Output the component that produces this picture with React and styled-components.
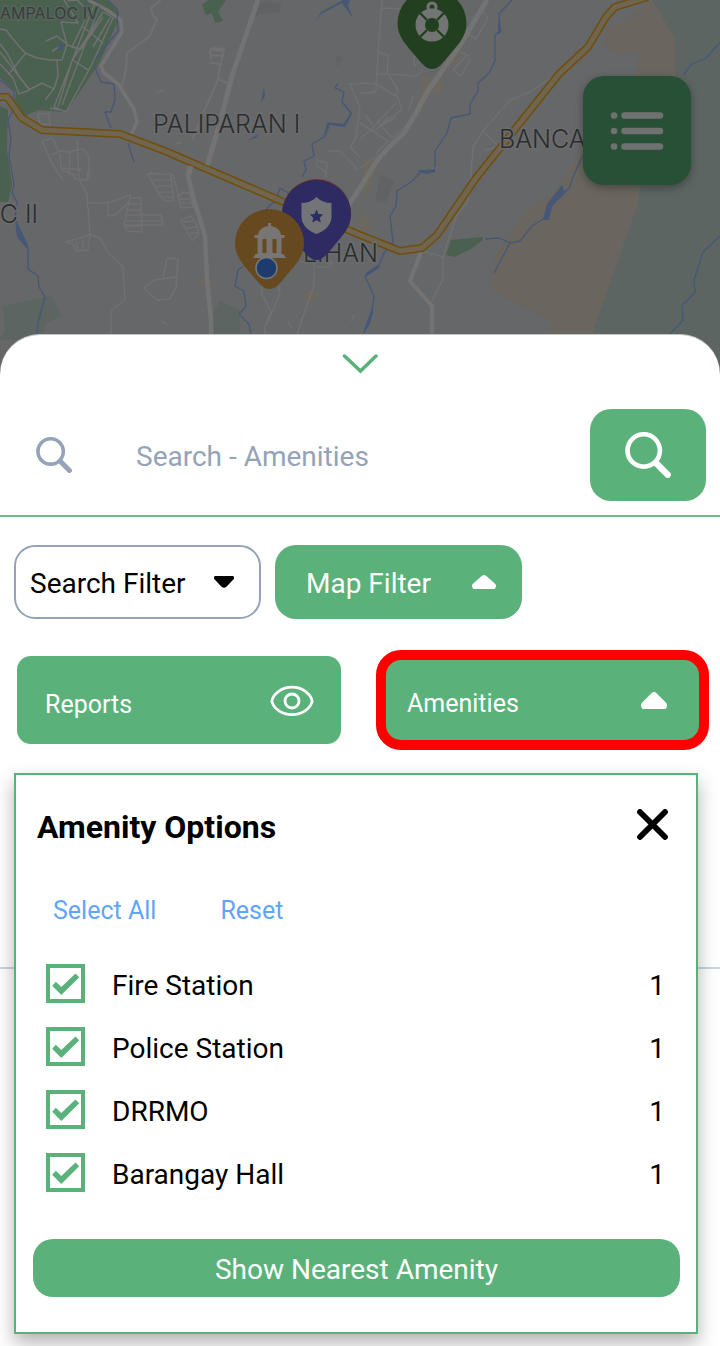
import React, { useState } from "react";
import styled, { createGlobalStyle, css } from "styled-components";

const GREEN = "#5ab27a";
const SLATE = "#94a3b8";

const GlobalStyle = createGlobalStyle`
  *, *::before, *::after { box-sizing: border-box; }
  body {
    margin: 0;
    background: #fff;
    color: #000;
    font-family: Roboto, "Liberation Sans", sans-serif;
  }
  button, input { font: inherit; color: inherit; }
  button { border: 0; padding: 0; background: none; cursor: pointer; }
`;

const Page = styled.main`
  display: flex;
  flex-direction: column;
  min-height: 100vh;
  overflow-x: hidden;
`;

const MapArea = styled.section`
  position: relative;
  height: 384px;
  background: #666769;
`;

const MapDrawing = styled.svg`
  display: block;
  width: 100%;
  height: 100%;
`;

const LegendButton = styled.button`
  position: absolute;
  top: 76px;
  right: 29px;
  display: grid;
  place-items: center;
  width: 108px;
  height: 109px;
  border-radius: 21px;
  background: #285037;
  box-shadow: 0 3px 8px rgba(0, 0, 0, 0.3);
`;

const Sheet = styled.section`
  position: relative;
  display: flex;
  flex-direction: column;
  flex: 1;
  margin-top: -50px;
  padding-bottom: 12px;
  border-top: 1px solid #c4c4c4;
  border-radius: 40px 40px 0 0;
  background: #fff;
`;

const CollapseButton = styled.button`
  display: grid;
  place-items: center;
  align-self: center;
  width: 80px;
  height: 58px;
  margin-bottom: 16px;
`;

const SearchForm = styled.form`
  display: flex;
  align-items: center;
  padding: 0 14px 14px 36px;
  border-bottom: 2px solid #6cbc8a;
  color: ${SLATE};
`;

const SearchInput = styled.input`
  flex: 1;
  min-width: 0;
  height: 60px;
  margin: 2px 20px 0 64px;
  padding: 0;
  border: 0;
  outline: 0;
  background: transparent;
  font-size: 28px;
  &::placeholder { color: ${SLATE}; opacity: 1; }
`;

const SearchButton = styled.button`
  display: grid;
  place-items: center;
  width: 116px;
  height: 92px;
  border-radius: 21px;
  background: ${GREEN};
  color: #fff;
`;

const FilterRow = styled.div`
  display: flex;
  gap: 14px;
  padding: 28px 14px 31px;
`;

const FilterButton = styled.button`
  display: flex;
  align-items: center;
  justify-content: space-between;
  width: 247px;
  height: 74px;
  border-radius: 21px;
  font-size: 28px;
  line-height: 36px;
  ${(p) =>
    p.$filled
      ? css`
          padding: 0 26px 0 31px;
          background: ${GREEN};
          color: #fff;
        `
      : css`
          padding: 0 25px 0 14px;
          border: 2px solid ${SLATE};
        `}
`;

const FilterName = styled.span`
  padding-top: 4px;
`;

const LayerRow = styled.div`
  display: grid;
  grid-template-columns: 324fr 333fr;
  align-items: center;
  gap: 35px;
  padding: 0 11px 23px 17px;
`;

const LayerButton = styled.button`
  display: flex;
  align-items: center;
  justify-content: space-between;
  height: ${(p) => (p.$active ? "100px" : "88px")};
  padding: ${(p) => (p.$active ? "0 32px 0 21px" : "2px 27px 0 28px")};
  border: ${(p) => (p.$active ? "10px solid #f00" : "0")};
  border-radius: ${(p) => (p.$active ? "25px" : "14px")};
  background: ${GREEN};
  color: #fff;
  font-size: 25px;
  line-height: 32px;
`;

const LayerName = styled.span`
  padding-top: 8px;
`;

const Stage = styled.div`
  display: grid;
  flex: 1;
  align-items: start;
`;

const Results = styled.div`
  grid-area: 1 / 1;
  align-self: stretch;
  margin-top: 194px;
  border-top: 2px solid #cbd5e1;
`;

const Panel = styled.section`
  grid-area: 1 / 1;
  display: flex;
  flex-direction: column;
  margin: 0 22px 0 14px;
  padding: 32px 16px 35px 17px;
  border: 2px solid ${GREEN};
  background: #fff;
  box-shadow: 0 9px 18px rgba(0, 0, 0, 0.3);
`;

const PanelHeader = styled.header`
  display: flex;
  align-items: center;
  justify-content: space-between;
  height: 40px;
  padding: 0 12px 0 4px;
`;

const PanelTitle = styled.h2`
  margin: 0;
  font-size: 32px;
  line-height: 40px;
  font-weight: 700;
`;

const CloseButton = styled.button`
  display: grid;
  place-items: center;
  padding-bottom: 5px;
`;

const Actions = styled.div`
  display: flex;
  gap: 64px;
  padding: 48px 20px 37px;
`;

const TextButton = styled.button`
  color: #60a5fa;
  font-size: 25px;
  line-height: 32px;
`;

const OptionList = styled.ul`
  display: flex;
  flex-direction: column;
  gap: 24px;
  margin: 0 0 47px;
  padding: 0 15px 0 13px;
  list-style: none;
`;

const OptionRow = styled.li`
  display: flex;
  align-items: center;
  justify-content: space-between;
  height: 39px;
  font-size: 28px;
  line-height: 36px;
`;

const OptionLabel = styled.label`
  display: flex;
  align-items: center;
  gap: 27px;
  cursor: pointer;
`;

const OptionText = styled.span`
  padding-top: 4px;
`;

const CheckFrame = styled.span`
  display: grid;
  width: 39px;
  height: 39px;
  > * { grid-area: 1 / 1; }
  > svg { pointer-events: none; }
  > input:not(:checked) + svg { visibility: hidden; }
`;

const CheckInput = styled.input`
  appearance: none;
  width: 39px;
  height: 39px;
  margin: 0;
  border: 4px solid ${GREEN};
  background: #fff;
  cursor: pointer;
`;

const PrimaryButton = styled.button`
  height: 58px;
  padding-top: 4px;
  border-radius: 20px;
  background: ${GREEN};
  color: #fff;
  font-size: 28px;
  line-height: 36px;
`;

const SearchIcon = ({ size }) => (
  <svg width={size} height={size} viewBox="0 0 46 46" fill="none" stroke="currentColor" aria-hidden="true">
    <circle cx="18.7" cy="18.5" r="16.2" strokeWidth="4.6" />
    <path d="M31 31 42.7 42.7" strokeWidth="6.4" strokeLinecap="round" />
  </svg>
);

const Caret = ({ width, height, down }) => (
  <svg width={width} height={height} viewBox="0 0 26 17" preserveAspectRatio="none" fill="currentColor" aria-hidden="true">
    <path
      d={
        down
          ? "M2 0H24Q26 0 26 2V4L16.5 15Q13 18.5 9.5 15L0 4V2Q0 0 2 0Z"
          : "M10.5 1.2Q13 -1 15.5 1.2L25.3 11Q27 14 24.6 17H1.4Q-1 14 .7 11Z"
      }
    />
  </svg>
);

const EyeIcon = () => (
  <svg width="44" height="32" viewBox="0 0 44 32" fill="none" stroke="#fff" strokeWidth="2.8" aria-hidden="true">
    <path d="M1.800 16C3.500 8.500 11.500 2.200 22 2.200S40.500 8.500 42.200 16C40.500 23.500 32.500 29.600 22 29.600S3.500 23.500 1.800 16Z" strokeLinejoin="round" />
    <circle cx="22" cy="16" r="7" />
  </svg>
);

const PIN = "M0 80C-5 80-8 77-14 70C-25 57-34.500 48-34.500 34.500A34.500 34.500 0 0 1 34.500 34.500C34.500 48 25 57 14 70C8 77 5 80 0 80Z";

const CityMap = () => (
  <MapDrawing viewBox="0 0 720 384" preserveAspectRatio="xMidYMin slice" role="img" aria-label="Map">
    <rect width="720" height="384" fill="#666769" />

    <g fill="#4a614f">
      <path d="M0 0H107L119 12V18L100 62 66 112 38 110 25 116 15 106 16 92 0 78Z" />
      <path d="M0 106 8 110 7 150 12 184 8 202H0Z" />
      <path d="M208 0H226L218 12 223 21 215 23 212 13 206 15 202 5Z" />
      <path d="M451 240 482 237 483 240 471 249 454 257 446 255Z" />
    </g>
    <g fill="#5c6562">
      <path d="M3 306 51 296 62 316 46 323 41 340H0V338L5 332Z" />
      <path d="M213 314 220 301 240 310 240 340H213Z" />
      <path d="M652 0H720V384H592L594 325 620 245 640 185 675 75V40Z" />
    </g>
    <g fill="#6a665f">
      <path d="M652 0 675 38V76L662 160 641 184 636 210 594 328V340H552L550 321 490 289 494 258 528 208 555 193 572 165 610 110 637 72 639 49 621 56 604 47 606 27 627 20Z" />
    </g>
    <g fill="#6b685f">
      <path d="M422 72 434 79 445 78 443 92 430 94 420 114 417 112 422 91Z" />
      <path d="M457 52 462 61 454 67 449 63Z" />
      <path d="M304 296 307 289 319 294 311 306Z" />
      <path d="M200 278H211V287H200Z" />
      <path d="M363 158 376 162 371 188 360 202V224L372 232 370 220 361 210Z" />
      <path d="M358 220 368 218 372 230 358 232Z" />
    </g>
    <g fill="#616264">
      <path d="M260 2 281 3 280 12 254 15Z" />
      <path d="M336 55 343 58 337 67Z" />
      <path d="M380 174 394 181 387 201 375 203Z" />
    </g>

    <g fill="none" stroke="#707071" strokeWidth="1.500" strokeLinejoin="round">
      <path d="M0 29 6 30 13 39 25 53 37 58 50 60 62 60 67 45 61 22M57 60 58 76 54 89 45 100M54 89 42 83 27 91 19 94 13 78 0 64M0 44 7 53 19 76 30 90M0 52 28 88M25 54 8 75M46 41 57 36 68 45 76 48M52 51 61 46M64 0 78 23 61 22" />
      <path d="M94 5 54 107 66 112 92 64 113 18 104 12M99 8 62 105M103 12 72 61 58 107M89 12 72 47 81 49 103 17M83 27 103 43M73 60 88 70M81 49 97 22M93 47 110 18M50 108 59 110M67 1 77 0 92 15" />
      <path d="M161 0 151 8 153 16 157 19 149 37 127 53 126 70 121 89M211 60 210 50 213 48 224 49 222 59 220 66 218 79 206 107 200 121 192 140M211 55 222 56M212 50 223 51M210 63 220 64M217 79 230 84" strokeWidth="2" />
      <path d="M38 114 49 114 50 125 40 124ZM42 141 53 138 58 151 66 152 83 149 89 157 89 180M42 141 52 163 63 180M52 155 60 151 70 152 69 175M77 139 79 178M60 154 61 168 67 169M63 168 82 170" />
      <path d="M62 170 75 175 74 179 87 180 88 170M79 180 87 194 89 223 90 234 101 239 107 252 123 267 125 299 111 311 111 334M89 203 108 203 130 195 130 201 115 215 108 216V202M130 198 141 198 142 232 127 231 124 225 130 198M128 204H141M126 210H141M125 215H161L163 225H125M126 221H162M125 226H141M66 242 87 236 90 234 88 250 76 251 73 244ZM76 242 78 249M83 240V249M148 174H171L174 201H165L158 193ZM153 180H171M156 186H172M158 192H173M163 197H174M148 174 153 172M173 174 178 194 181 208 193 207 190 194 184 192 179 195M179 199H190M181 203H191M181 220 191 216 197 225 199 234 192 241ZM184 222 194 221M187 228 197 227M190 234 199 232M167 258 178 259 176 287 170 299 157 300 144 288 154 280 176 277M163 278 167 258" />
      <path d="M382 0 378 52 376 91 364 94M378 52 388 55 387 74 416 76 423 70M382 8 410 9M376 74H388M360 83 376 84 396 96 398 90 388 74M360 93H376M397 96 402 109 374 131M377 121 392 138 406 126M360 123 388 141 376 154M360 139 371 130 380 120 396 103M415 45 414 66 421 60M480 8 488 18 476 39 468 34 486 5M465 57 453 70 461 76 471 58M460 52 469 56M413 96 409 110M365 115 373 125M376 130 388 117M381 126 396 117M386 150 360 168" />
      <path d="M348 84H360M350 84 360 108 356 137 350 148M327 151 340 151 358 170M325 171 317 166 317 160 327 163 326 177ZM351 147 360 158M558 73 530 92 510 100 483 131 473 147 470 188 468 201 456 217 443 257 443 279 431 303M483 131 500 148M485 150 503 146M422 251 443 257M262 278 262 294 271 312 265 326V335M279 286 280 294 266 326M314 263V285L297 334M300 262H332L329 267 314 267M288 321 292 328M354 315 351 321M161 321 167 324M175 143H182M157 92 164 90" />
    </g>

    <g fill="none" stroke="#737374" strokeLinejoin="round">
      <path d="M88 0 107 10 121 20 122 32 101 66 104 73 118 84 134 109 137 122 131 135" strokeWidth="3.500" />
      <path d="M258 0 232 76 220 122 207 167" strokeWidth="5" />
      <path d="M190 166 188 176 194 200 205 236 207 280 211 320V340" strokeWidth="4.500" />
      <path d="M487 0 459 47 429 89 416 113 404 133 388 148 376 162 360 188 338 221" strokeWidth="5" />
      <path d="M422 249 410 281 432 306V338" strokeWidth="4" />
    </g>

    <g fill="none" stroke="#465777" strokeWidth="1.300" strokeLinejoin="round">
      <path d="M108 0 117 9 118 31 95 60 96 70 101 82 114 84 115 99 111 112 105 112 111 128M128 143 134 162M0 80 14 91 14 108 8 120 11 138 9 156 14 184 12 193 17 202 15 220 28 248V269L38 276 39 287 45 297 38 322 37 335" />
      <path d="M338 83 335 88 344 92 342 102 351 113 344 125 328 123 324 137 312 144 314 156 304 161 306 170 302 177M302 186 291 195 280 188 276 200 267 208 264 215M244 266 238 270 235 286 244 291 246 306 239 314 249 324 251 336" />
      <path d="M512 0 499 14 500 31 495 35 495 61 489 73 478 83 478 91 470 104V114L451 118 447 133 435 151 435 167M435 170 422 171 411 182 397 191 396 206 390 216 393 242 384 253 378 268 365 276 374 296 372 312 364 333" />
      <path d="M720 43 712 51 706 58 692 64 683 75M584 153 572 179 570 187 554 203 543 219 532 226 520 241 510 243 499 238 485 239M510 243 494 273M720 236 703 252 694 280 695 293 682 305 683 320 669 335" />
    </g>
    <g fill="#465777">
      <path d="M315 23 321 12 343 0H350L348 6 353 18 347 10 342 3 321 14Z" />
      <path d="M264 87 265 96 261 103ZM248 140 259 134 256 138ZM59 42 63 45 62 50 58 50Z" />
      <path d="M327 123 343 124 351 114 347 108 341 102 346 105 352 114 345 127 330 125 325 138Z" />
      <path d="M417 171 420 170 433 170 435 168V172L427 174ZM498 21 502 31 498 35Z" />
      <path d="M372 307 373 314 369 326 363 333ZM366 273 379 264 376 270 364 278ZM562 185 565 193 552 206 549 220 543 220 547 204ZM14 210 18 224 28 245V250L17 237Z" />
    </g>

    <g fill="none" strokeLinejoin="round">
      <path d="M0 97H7L22 118 42 130 120 134 165 151 230 179 360 235 400 251 422 248 437 235 476 178 559 74 588 47 606 17 615 7 648-3" stroke="#704e0d" strokeWidth="8" />
      <path d="M0 97H7L22 118 42 130 120 134 165 151 230 179 360 235 400 251 422 248 437 235 476 178 559 74 588 47 606 17 615 7 648-3" stroke="#70654e" strokeWidth="5" />
    </g>
    <path d="M207 165 209 158M190 174 191 166" stroke="#737374" strokeWidth="4" />

    <g fill="#2b2c2d" stroke="#6b6c6e" strokeWidth="3" paintOrder="stroke" fontFamily="Inter, sans-serif" fontWeight="300" fontSize="25">
      <text x="153" y="133">PALIPARAN I</text>
      <text x="499" y="148">BANCAL</text>
      <text x="303" y="262">LIHAN</text>
      <text x="38" y="223" textAnchor="end">C II</text>
      <text x="98" y="19" textAnchor="end" fontSize="16" fontWeight="400" fill="#3a3d3c" stroke="#56655b">AMPALOC IV</text>
    </g>

    <g transform="translate(432 -11)">
      <path d={PIN} fill="#22401f" />
      <circle cx="0" cy="36" r="11.500" fill="none" stroke="#737574" strokeWidth="10" />
      <circle cx="0" cy="18" r="4" fill="none" stroke="#737574" strokeWidth="3" />
      <path d="M-12 24-5 31M12 24 5 31M-12 48-5 41M12 48 5 41" stroke="#22401f" strokeWidth="2.400" />
      <circle cx="0" cy="36" r="7" fill="#22401f" />
    </g>
    <g transform="translate(316.500 179)">
      <path d={PIN} fill="#692f2a" />
      <path d={PIN} fill="#2e2b63" transform="translate(0 1)" />
      <path d="M0 18C4 22 9 24 15 24V38C15 46 8 52 0 55C-8 52-15 46-15 38V24C-9 24-4 22 0 18Z" fill="#737477" />
      <path d="M0 30.500 2 35 6.700 35.500 3.300 38.800 4.200 43.500 0 41.200-4.200 43.500-3.300 38.800-6.700 35.500-2 35Z" fill="#2e2b63" />
    </g>
    <g transform="translate(269.500 209)">
      <path d={PIN} fill="#67491f" />
      <path d="M-1.500 14H1.500V17C7 18 11 21 11.500 26H15V29H12V45H14L16.500 49H-16.500L-14 45H-12V29H-15V26H-11.500C-11 21-7 18-1.500 17Z" fill="#777674" />
      <path d="M-7 30H-3V44H-7ZM3 30H7V44H3Z" fill="#67491f" />
    </g>
    <circle cx="266.500" cy="268" r="10.500" fill="#1d3c6d" stroke="#74787d" strokeWidth="1.500" />
  </MapDrawing>
);

const ListIcon = () => (
  <svg width="54" height="38" viewBox="0 0 54 38" fill="none" stroke="#707271" strokeWidth="6.500" strokeLinecap="round" aria-hidden="true">
    <path d="M14.500 3.500H50M14.500 19H50M14.500 34.500H50M4 3.500H4.100M4 19H4.100M4 34.500H4.100" />
  </svg>
);

const AMENITIES = [
  { id: "fire", name: "Fire Station", count: 1 },
  { id: "police", name: "Police Station", count: 1 },
  { id: "drrmo", name: "DRRMO", count: 1 },
  { id: "hall", name: "Barangay Hall", count: 1 },
];

const everyAmenity = (value) => Object.fromEntries(AMENITIES.map((a) => [a.id, value]));

export default function App() {
  const [selected, setSelected] = useState(everyAmenity(true));
  const toggle = (id) => setSelected((s) => ({ ...s, [id]: !s[id] }));

  return (
    <>
      <GlobalStyle />
      <Page>
        <MapArea>
          <CityMap />
          <LegendButton type="button" aria-label="Legend">
            <ListIcon />
          </LegendButton>
        </MapArea>

        <Sheet>
          <CollapseButton type="button" aria-label="Collapse">
            <svg width="36" height="20" viewBox="0 0 36 20" fill="none" stroke={GREEN} strokeWidth="3.500" strokeLinecap="round" aria-hidden="true">
              <path d="M2.500 2 18.500 17 34 2" />
            </svg>
          </CollapseButton>

          <SearchForm onSubmit={(e) => e.preventDefault()}>
            <SearchIcon size={36} />
            <SearchInput type="text" aria-label="Search amenities" placeholder="Search - Amenities" />
            <SearchButton type="submit" aria-label="Search">
              <SearchIcon size={46} />
            </SearchButton>
          </SearchForm>

          <FilterRow>
            <FilterButton type="button">
              <FilterName>Search Filter</FilterName>
              <Caret down width={20} height={12} />
            </FilterButton>
            <FilterButton type="button" $filled>
              <FilterName>Map Filter</FilterName>
              <Caret width={24} height={14} />
            </FilterButton>
          </FilterRow>

          <LayerRow>
            <LayerButton type="button">
              <LayerName>Reports</LayerName>
              <EyeIcon />
            </LayerButton>
            <LayerButton type="button" $active aria-expanded="true">
              <LayerName>Amenities</LayerName>
              <Caret width={26} height={17} />
            </LayerButton>
          </LayerRow>

          <Stage>
            <Results />
            <Panel aria-labelledby="amenity-title">
              <PanelHeader>
                <PanelTitle id="amenity-title">Amenity Options</PanelTitle>
                <CloseButton type="button" aria-label="Close">
                  <svg width="31" height="31" viewBox="0 0 31 31" stroke="#000" strokeWidth="5.800" strokeLinecap="round" aria-hidden="true">
                    <path d="M3 3 28 28M28 3 3 28" />
                  </svg>
                </CloseButton>
              </PanelHeader>

              <Actions>
                <TextButton type="button" onClick={() => setSelected(everyAmenity(true))}>
                  Select All
                </TextButton>
                <TextButton type="button" onClick={() => setSelected(everyAmenity(false))}>
                  Reset
                </TextButton>
              </Actions>

              <OptionList>
                {AMENITIES.map((a) => (
                  <OptionRow key={a.id}>
                    <OptionLabel htmlFor={a.id}>
                      <CheckFrame>
                        <CheckInput id={a.id} type="checkbox" checked={selected[a.id]} onChange={() => toggle(a.id)} />
                        <svg width="39" height="39" viewBox="0 0 39 39" fill={GREEN} aria-hidden="true">
                          <path d="M6.200 21.700 9.800 17.800 15.300 23 29.500 9.500 33.200 13.300 15.300 30.900Z" />
                        </svg>
                      </CheckFrame>
                      <OptionText>{a.name}</OptionText>
                    </OptionLabel>
                    <OptionText>{a.count}</OptionText>
                  </OptionRow>
                ))}
              </OptionList>

              <PrimaryButton type="button">Show Nearest Amenity</PrimaryButton>
            </Panel>
          </Stage>
        </Sheet>
      </Page>
    </>
  );
}
